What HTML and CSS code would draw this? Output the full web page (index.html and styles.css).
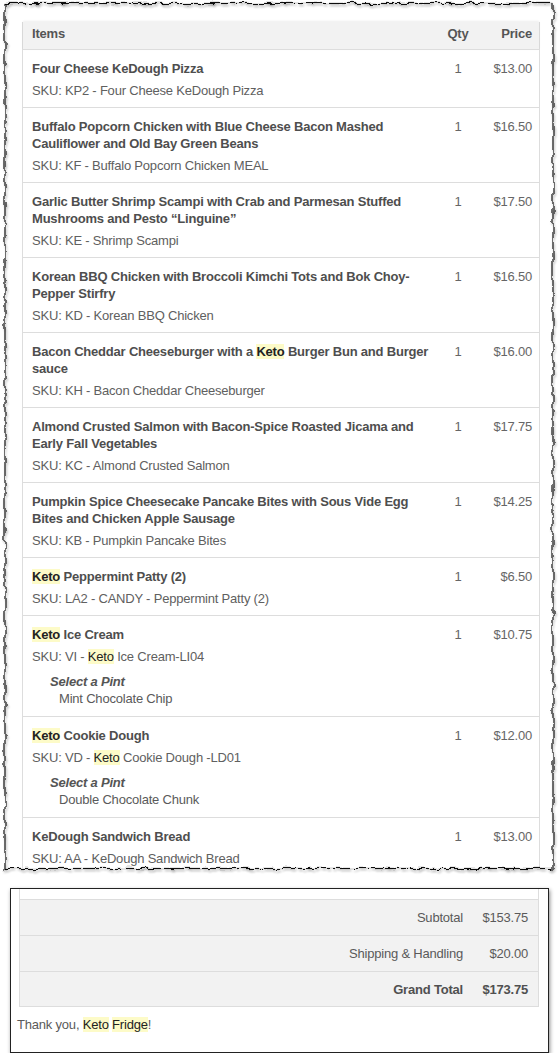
FILE: index.html
```html
<!DOCTYPE html>
<html>
<head>
<meta charset="utf-8">
<link rel="stylesheet" href="styles.css">
</head>
<body>
<div class="sheet">
  <div class="sheet-clip">
    <div class="items">
      <div class="row head">
        <div class="c-item">Items</div>
        <div class="c-qty">Qty</div>
        <div class="c-price">Price</div>
      </div>
      <div class="row">
        <div class="c-item"><div class="title">Four Cheese KeDough Pizza</div><div class="sku">SKU: KP2 - Four Cheese KeDough Pizza</div></div>
        <div class="c-qty">1</div><div class="c-price">$13.00</div>
      </div>
      <div class="row">
        <div class="c-item"><div class="title">Buffalo Popcorn Chicken with Blue Cheese Bacon Mashed Cauliflower and Old Bay Green Beans</div><div class="sku">SKU: KF - Buffalo Popcorn Chicken MEAL</div></div>
        <div class="c-qty">1</div><div class="c-price">$16.50</div>
      </div>
      <div class="row">
        <div class="c-item"><div class="title">Garlic Butter Shrimp Scampi with Crab and Parmesan Stuffed Mushrooms and Pesto “Linguine”</div><div class="sku">SKU: KE - Shrimp Scampi</div></div>
        <div class="c-qty">1</div><div class="c-price">$17.50</div>
      </div>
      <div class="row">
        <div class="c-item"><div class="title">Korean BBQ Chicken with Broccoli Kimchi Tots and Bok Choy-Pepper Stirfry</div><div class="sku">SKU: KD - Korean BBQ Chicken</div></div>
        <div class="c-qty">1</div><div class="c-price">$16.50</div>
      </div>
      <div class="row">
        <div class="c-item"><div class="title">Bacon Cheddar Cheeseburger with a <mark>Keto</mark> Burger Bun and Burger sauce</div><div class="sku">SKU: KH - Bacon Cheddar Cheeseburger</div></div>
        <div class="c-qty">1</div><div class="c-price">$16.00</div>
      </div>
      <div class="row">
        <div class="c-item"><div class="title">Almond Crusted Salmon with Bacon-Spice Roasted Jicama and Early Fall Vegetables</div><div class="sku">SKU: KC - Almond Crusted Salmon</div></div>
        <div class="c-qty">1</div><div class="c-price">$17.75</div>
      </div>
      <div class="row">
        <div class="c-item"><div class="title">Pumpkin Spice Cheesecake Pancake Bites with Sous Vide Egg Bites and Chicken Apple Sausage</div><div class="sku">SKU: KB - Pumpkin Pancake Bites</div></div>
        <div class="c-qty">1</div><div class="c-price">$14.25</div>
      </div>
      <div class="row">
        <div class="c-item"><div class="title"><mark>Keto</mark> Peppermint Patty (2)</div><div class="sku">SKU: LA2 - CANDY - Peppermint Patty (2)</div></div>
        <div class="c-qty">1</div><div class="c-price">$6.50</div>
      </div>
      <div class="row">
        <div class="c-item"><div class="title"><mark>Keto</mark> Ice Cream</div><div class="sku">SKU: VI - <mark>Keto</mark> Ice Cream-LI04</div>
          <div class="option"><div class="opt-label">Select a Pint</div><div class="opt-value">Mint Chocolate Chip</div></div></div>
        <div class="c-qty">1</div><div class="c-price">$10.75</div>
      </div>
      <div class="row">
        <div class="c-item"><div class="title"><mark>Keto</mark> Cookie Dough</div><div class="sku">SKU: VD - <mark>Keto</mark> Cookie Dough -LD01</div>
          <div class="option"><div class="opt-label">Select a Pint</div><div class="opt-value">Double Chocolate Chunk</div></div></div>
        <div class="c-qty">1</div><div class="c-price">$12.00</div>
      </div>
      <div class="row">
        <div class="c-item"><div class="title">KeDough Sandwich Bread</div><div class="sku">SKU: AA - KeDough Sandwich Bread</div></div>
        <div class="c-qty">1</div><div class="c-price">$13.00</div>
      </div>
    </div>
  </div>
  <svg class="torn" width="559" height="880" viewBox="0 0 559 880">
    <defs>
      <filter id="rough" filterUnits="userSpaceOnUse" x="0" y="0" width="559" height="880">
        <feTurbulence type="fractalNoise" baseFrequency="0.12" numOctaves="2" seed="7" result="noise"/>
        <feDisplacementMap in="SourceGraphic" in2="noise" scale="6" xChannelSelector="R" yChannelSelector="G" result="disp"/>
        <feGaussianBlur in="disp" stdDeviation="1.2" result="blur"/>
        <feOffset in="blur" dx="1" dy="1.5" result="off"/>
        <feColorMatrix in="off" type="matrix" values="0 0 0 0 0  0 0 0 0 0  0 0 0 0 0  0 0 0 0.35 0" result="shadow"/>
        <feMerge><feMergeNode in="shadow"/><feMergeNode in="disp"/></feMerge>
      </filter>
    </defs>
    <rect x="5" y="3.5" width="548" height="865" fill="none" stroke="#111" stroke-width="1.2" filter="url(#rough)"/>
  </svg>
</div>

<div class="totals-box">
  <div class="totals">
    <div class="stub"></div>
    <div class="trow"><div class="t-label">Subtotal</div><div class="t-value">$153.75</div></div>
    <div class="trow"><div class="t-label">Shipping &amp; Handling</div><div class="t-value">$20.00</div></div>
    <div class="trow grand"><div class="t-label">Grand Total</div><div class="t-value">$173.75</div></div>
  </div>
  <p class="thanks">Thank you, <mark>Keto</mark> <mark>Fridge</mark>!</p>
</div>
</body>
</html>
```

FILE: styles.css
```css
* { box-sizing: border-box; }

html, body {
  margin: 0;
  padding: 0;
  background: #fff;
}

body {
  width: 559px;
  font-family: "Liberation Sans", Arial, Helvetica, sans-serif;
  font-size: 13px;
  line-height: 17px;
  letter-spacing: -0.2px;
  color: #5a5a5a;
}

mark {
  background: #fdfbc8;
  color: #222;
}

.sheet {
  position: relative;
  width: 559px;
  height: 876px;
}

.sheet-clip {
  height: 868px;
  overflow: hidden;
  padding: 22px 0 0 22px;
}

.torn {
  position: absolute;
  left: 0;
  top: 0;
  pointer-events: none;
}

.items {
  width: 518px;
  border-left: 1px solid #ddd;
  border-right: 1px solid #ddd;
  background: #fff;
}

.row {
  display: grid;
  grid-template-columns: 1fr 38px 62px;
  border-bottom: 1px solid #ddd;
}

.row > div {
  padding-top: 10px;
  padding-bottom: 8px;
}

.head {
  background: #f2f2f2;
  box-shadow: 0 -1px 2px rgba(0, 0, 0, 0.07);
  font-weight: bold;
  color: #555;
}

.head > div {
  padding-top: 3px;
  padding-bottom: 7px;
}

.c-item {
  padding-left: 9px;
  padding-right: 0;
}

.c-qty {
  text-align: center;
  color: #666;
}

.c-price {
  text-align: right;
  padding-right: 7px;
  color: #666;
}

.head .c-qty,
.head .c-price {
  color: #555;
}

.title {
  font-weight: bold;
  color: #4e4e4e;
}

.sku {
  margin-top: 5px;
  color: #606060;
}

.option {
  margin-top: 8px;
  margin-bottom: 1px;
}

.opt-label {
  padding-left: 18px;
  font-weight: bold;
  font-style: italic;
  color: #555;
}

.opt-value {
  padding-left: 27px;
  color: #5a5a5a;
}

.totals-box {
  margin: 12px 10px 0 10px;
  width: 539px;
  border: 1px solid #222;
  box-shadow: 1px 2px 4px rgba(0, 0, 0, 0.45);
  padding: 0 9px 19px 6px;
  background: #fff;
}

.totals {
  margin-left: 2px;
  border-left: 1px solid #ddd;
  border-right: 1px solid #ddd;
}

.stub {
  height: 10px;
  background: #fff;
}

.trow {
  display: grid;
  grid-template-columns: 1fr 75px;
  align-items: center;
  height: 36px;
  background: #f2f2f2;
  border-top: 1px solid #ddd;
  color: #5a5a5a;
}

.trow.grand {
  border-bottom: 1px solid #ddd;
  font-weight: bold;
  color: #505050;
}

.t-label {
  text-align: right;
}

.t-value {
  text-align: right;
  padding-right: 10px;
}

.thanks {
  margin: 9px 0 0 0;
  color: #5a5a5a;
}
```
